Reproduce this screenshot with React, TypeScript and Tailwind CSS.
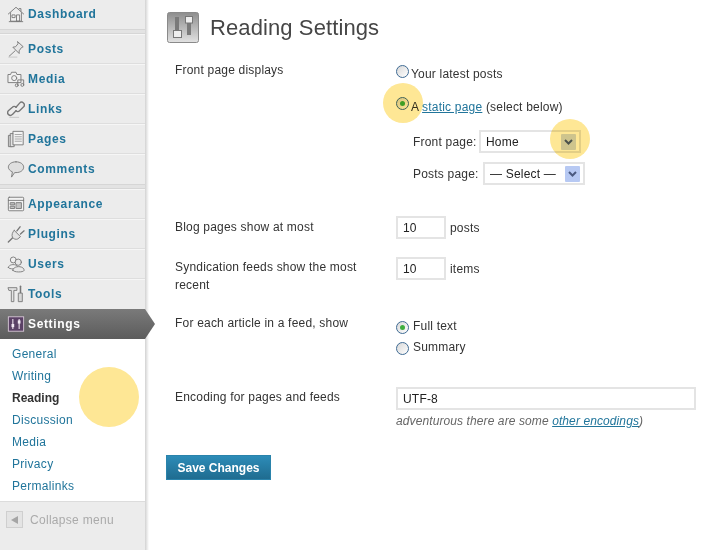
import type { ReactNode } from "react";

const stroke = { fill: "none", stroke: "#777777", strokeWidth: 1, strokeLinejoin: "round" as const, strokeLinecap: "round" as const };

function Svg({ children, size = 18 }: { children: ReactNode; size?: number }) {
  return (
    <svg width={size} height={size} viewBox="0 0 20 20" className="shrink-0">
      {children}
    </svg>
  );
}

const icons: Record<string, ReactNode> = {
  Dashboard: (
    <g {...stroke}>
      <path d="M1.5 10 L10 2.5 L18.5 10" />
      <path d="M4 8.5 V18 H16 V8.5" fill="#f1f1f1" />
      <path d="M13.5 4 h2 v3" />
      <path d="M6 11 h3 v3 h-3 z M11 11 h3 v7 h-3 z" />
      <path d="M2.5 18.5 H17.5" />
    </g>
  ),
  Posts: (
    <g {...stroke}>
      <path d="M12 2 L18 7.5 L16 8.5 L13.5 12 L13.5 15 L6.5 8 L9.5 7.5 L12 4.5 Z" fill="#e6e6e6" />
      <path d="M9 12 L2.5 18" />
      <path d="M2 19 H11" stroke="#c4c4c4" />
    </g>
  ),
  Media: (
    <g {...stroke}>
      <path d="M1.5 5 H4 L5 2.5 H10 L11 5 H15.5 V14 H1.5 Z" fill="#f1f1f1" />
      <circle cx="8" cy="9" r="2.8" />
      <path d="M12 16.5 V11 H18.5 V16" />
      <circle cx="10.8" cy="17" r="1.6" />
      <circle cx="17" cy="16.6" r="1.6" />
    </g>
  ),
  Links: (
    <g {...stroke} strokeWidth={1.5}>
      <path d="M10 8 L14 3.5 A2.8 2.8 0 0 1 18.5 7.5 L14 12 A2.8 2.8 0 0 1 10 12" />
      <path d="M10 12 L6 16 A2.8 2.8 0 0 1 1.5 12 L6 8 A2.8 2.8 0 0 1 10 8" />
      <path d="M3 19.3 H13" stroke="#c4c4c4" strokeWidth={1} />
    </g>
  ),
  Pages: (
    <g {...stroke}>
      <path d="M2 6 H6 V18.5 H2 Z" fill="#dcdcdc" />
      <path d="M4 4 H8 V18.5 H4 Z" fill="#e4e4e4" />
      <path d="M7 1.5 H18 V16.5 H7 Z" fill="#f3f3f3" />
      <path d="M9 5 H16 M9 7.5 H16 M9 10 H16 M9 12.5 H16" stroke="#a0a0a0" />
    </g>
  ),
  Comments: (
    <g {...stroke}>
      <path d="M10 2 C15.5 2 18.5 5 18.5 8 C18.5 11 15.5 14 10 14 L8.5 14 L5 19 L6 13.2 C3.2 12 1.5 10 1.5 8 C1.5 5 4.5 2 10 2 Z" fill="#dfdfdf" />
    </g>
  ),
  Appearance: (
    <g {...stroke}>
      <rect x="1.5" y="2.5" width="17" height="15" rx="1" fill="#f3f3f3" />
      <path d="M1.5 6 H18.5" />
      <path d="M4 8.5 H8.5 V11 H4 Z M4 12.5 H8.5 V15 H4 Z M10.5 8.5 H16 V15 H10.5 Z" fill="#c4c4c4" />
    </g>
  ),
  Plugins: (
    <g {...stroke}>
      <path d="M8 6 L15 13 L12 15.5 C10 16.5 7 15.5 6 13.5 C5 11 6 8 8 6 Z" fill="#e4e4e4" />
      <path d="M11 6.5 L14.5 2 M15 10 L19 6.5" strokeWidth={1.5} />
      <path d="M6 14.5 L1.5 19" strokeWidth={1.5} />
    </g>
  ),
  Users: (
    <g {...stroke}>
      <circle cx="7" cy="5.5" r="3.3" fill="#f0f0f0" />
      <path d="M1.5 14 C1.5 9.5 12 9.5 12 14 C12 16 1.5 16 1.5 14 Z" fill="#f0f0f0" />
      <circle cx="12.5" cy="8" r="3.5" fill="#e8e8e8" />
      <path d="M6.5 17 C6.5 11.5 19 11.5 19 17 C19 19.5 6.5 19.5 6.5 17 Z" fill="#e8e8e8" />
    </g>
  ),
  Tools: (
    <g {...stroke}>
      <path d="M1.5 3 H11 V6 H7.6 V18.5 H4.8 V6 H2.5 Z" fill="#e4e4e4" />
      <path d="M15 1.5 V8.5" strokeWidth={1.7} />
      <path d="M13 9 H17 V18.5 H13 Z" fill="#d8d8d8" />
    </g>
  ),
  Settings: (
    <g>
      <rect x="1.5" y="2" width="17" height="16" fill="#5b4166" stroke="#d8c8d8" strokeWidth={1} />
      <path d="M6.5 4.5 V15.5 M13.5 4.5 V15.5" stroke="#efe4ef" strokeWidth={1.2} />
      <rect x="5" y="10" width="3" height="3.5" fill="#f3e9f3" />
      <rect x="12" y="6" width="3" height="3.5" fill="#f3e9f3" />
    </g>
  ),
};

function MenuItem({ label, last }: { label: string; last?: boolean }) {
  return (
    <div
      className={`flex h-[30px] items-center gap-[3px] border-y border-t-[#f6f6f6] bg-[#ececec] pl-[7px] ${
        last ? "border-b-[#ececec]" : "border-b-[#dedede]"
      }`}
    >
      <Svg>{icons[label]}</Svg>
      <span className="text-[12px] font-bold tracking-[0.65px] text-[#21759b]">{label}</span>
    </div>
  );
}

function Separator() {
  return <div className="h-[5px] border-y border-[#d6d6d6] bg-[#e3e3e3]" />;
}

function Radio({ checked }: { checked?: boolean }) {
  return (
    <span className="flex h-[13px] w-[13px] shrink-0 items-center justify-center rounded-full border border-[#3f6b94] bg-gradient-to-br from-[#d8d8d8] to-white">
      {checked && <span className="h-[5px] w-[5px] rounded-full bg-[#3fae3f]" />}
    </span>
  );
}

function Select({ value, tint }: { value: string; tint: string }) {
  return (
    <div className="flex h-[23px] w-[102px] items-center justify-between border-2 border-[#e4e4e4] bg-white pl-[5px] pr-[3px] text-[#222]">
      <span>{value}</span>
      <span className={`flex h-[16px] w-[15px] items-center justify-center rounded-[1px] ${tint}`}>
        <svg width="9" height="6" viewBox="0 0 9 6">
          <path d="M1 1 L4.5 4.5 L8 1" fill="none" stroke="#4b5a80" strokeWidth="2" />
        </svg>
      </span>
    </div>
  );
}

function TextBox({ value, width }: { value: string; width: string }) {
  return (
    <div className={`flex h-[23px] items-center border-2 border-[#e4e4e4] bg-white pl-[5px] text-[12px] text-[#222] ${width}`}>
      {value}
    </div>
  );
}

function Row({ label, height, labelClass = "", children }: { label: ReactNode; height: string; labelClass?: string; children: ReactNode }) {
  return (
    <div className={`flex ${height}`}>
      <div className={`w-[221px] shrink-0 pr-[30px] leading-[18px] ${labelClass}`}>{label}</div>
      <div>{children}</div>
    </div>
  );
}

function Highlight({ className }: { className: string }) {
  return <div className={`absolute rounded-full bg-[#fee795] mix-blend-multiply ${className}`} />;
}

export default function App() {
  const submenu = ["General", "Writing", "Reading", "Discussion", "Media", "Privacy", "Permalinks"];

  return (
    <div className="relative flex h-[550px] w-[701px] overflow-hidden bg-white font-['Liberation_Sans',Arial,sans-serif] text-[12px] tracking-[0.2px] text-[#333]">
      <aside className="flex w-[145px] shrink-0 flex-col bg-[#ececec]">
        <div className="-mt-[1px]">
          <MenuItem label="Dashboard" last />
        </div>
        <Separator />
        {["Posts", "Media", "Links", "Pages"].map((label) => (
          <MenuItem key={label} label={label} />
        ))}
        <MenuItem label="Comments" last />
        <Separator />
        {["Appearance", "Plugins", "Users"].map((label) => (
          <MenuItem key={label} label={label} />
        ))}
        <MenuItem label="Tools" last />
        <div className="relative flex h-[30px] items-center gap-[3px] bg-gradient-to-b from-[#7a7a7a] to-[#5c5c5c] pl-[7px]">
          <Svg>{icons.Settings}</Svg>
          <span className="text-[12px] font-bold tracking-[0.65px] text-white">Settings</span>
          <div className="absolute left-full top-0 h-[30px] w-[10px] bg-gradient-to-b from-[#7a7a7a] to-[#5c5c5c] [clip-path:polygon(0_0,100%_50%,0_100%)]" />
        </div>
        <nav className="flex h-[162px] flex-col bg-white pl-[12px] pt-[4px] text-[12px] tracking-[0.3px]">
          {submenu.map((item) => (
            <a
              key={item}
              className={`flex h-[22px] items-center ${item === "Reading" ? "font-bold tracking-[0px] text-[#333]" : "text-[#21759b]"}`}
            >
              {item}
            </a>
          ))}
        </nav>
        <div className="flex flex-1 items-start gap-[7px] border-t border-[#dcdcdc] pl-[6px] pt-[9px] text-[12px] tracking-[0.3px] text-[#aaa]">
          <span className="flex h-[17px] w-[17px] items-center justify-center border border-[#cfcfcf] bg-[#e4e4e4]">
            <span className="h-0 w-0 border-y-[4px] border-r-[7px] border-y-transparent border-r-[#a5a5a5]" />
          </span>
          <span>Collapse menu</span>
        </div>
      </aside>
      <div className="w-[4px] shrink-0 bg-gradient-to-r from-[#d2d2d2] to-white" />

      <main className="flex-1 pl-[18px]">
        <header className="flex items-center gap-[11px] pt-[12px]">
          <svg width="32" height="31" viewBox="0 0 32 31" className="shrink-0">
            <defs>
              <linearGradient id="plate" x1="0" y1="0" x2="0" y2="1">
                <stop offset="0" stopColor="#8d8d8d" />
                <stop offset="1" stopColor="#e2e2e2" />
              </linearGradient>
            </defs>
            <rect x="0.5" y="0.5" width="31" height="30" rx="2" fill="url(#plate)" stroke="#8a8a8a" />
            <rect x="8" y="5" width="4" height="13" fill="#7a7a7a" />
            <rect x="20" y="11" width="4" height="12" fill="#7a7a7a" />
            <rect x="6.5" y="18.5" width="8" height="7" fill="#eee" stroke="#777" />
            <rect x="18.5" y="4.5" width="7" height="6.5" fill="#eee" stroke="#777" />
          </svg>
          <h1 className="text-[22px] leading-[30px] tracking-[0.1px] text-[#464646]">Reading Settings</h1>
        </header>

        <div className="pl-[8px] pt-[19px]">
          <Row label="Front page displays" height="h-[154px]" labelClass="-mt-[1px]">
            <div className="mt-[3px] flex h-[13px] items-center gap-[2px]">
              <Radio />
              <span className="relative top-[2px]">Your latest posts</span>
            </div>
            <div className="mt-[19px] flex h-[13px] items-center gap-[2px]">
              <Radio checked />
              <span className="relative top-[3px]">
                A{" "}
                <a className="text-[#21759b] underline">static page</a> (select below)
              </span>
            </div>
            <div className="mt-[20px] flex items-center pl-[17px]">
              <span className="w-[66px]">Front page:</span>
              <Select value="Home" tint="bg-[#cfd9f2]" />
            </div>
            <div className="mt-[9px] flex items-center pl-[17px]">
              <span className="w-[70px]">Posts page:</span>
              <Select value="— Select —" tint="bg-[#b7c9f3]" />
            </div>
          </Row>

          <Row label="Blog pages show at most" height="h-[41px]" labelClass="mt-[2px]">
            <div className="flex items-center gap-[4px]">
              <TextBox value="10" width="w-[50px]" />
              <span>posts</span>
            </div>
          </Row>

          <Row label="Syndication feeds show the most recent" height="h-[60px]" labelClass="mt-[1px]">
            <div className="flex items-center gap-[4px]">
              <TextBox value="10" width="w-[50px]" />
              <span>items</span>
            </div>
          </Row>

          <Row label="For each article in a feed, show" height="h-[70px]" labelClass="-mt-[3px]">
            <div className="mt-[4px] flex h-[13px] items-center gap-[4px]">
              <Radio checked />
              <span className="relative -top-[2px]">Full text</span>
            </div>
            <div className="mt-[8px] flex h-[13px] items-center gap-[4px]">
              <Radio />
              <span className="relative -top-[2px]">Summary</span>
            </div>
          </Row>

          <Row label="Encoding for pages and feeds" height="h-[68px]" labelClass="mt-[1px]">
            <TextBox value="UTF-8" width="w-[300px]" />
            <p className="mt-[2px] italic leading-[18px] tracking-[0.1px] text-[#666]">
              adventurous there are some <a className="text-[#21759b] underline">other encodings</a>)
            </p>
          </Row>
        </div>

        <button className="-ml-px h-[25px] w-[105px] border border-[#2a83ab] bg-gradient-to-b from-[#2d8cb8] to-[#1f6c90] text-[12px] font-bold tracking-[0px] text-white">
          Save Changes
        </button>
      </main>

      <Highlight className="left-[383px] top-[83px] h-[40px] w-[40px]" />
      <Highlight className="left-[550px] top-[119px] h-[40px] w-[40px]" />
      <Highlight className="left-[79px] top-[367px] h-[60px] w-[60px]" />
    </div>
  );
}
